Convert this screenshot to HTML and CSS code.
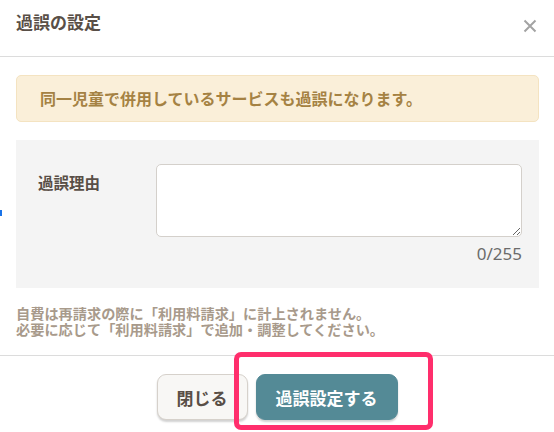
FILE: index.html
```html
<!DOCTYPE html>
<html lang="ja">
<head>
<meta charset="utf-8">
<title>過誤の設定</title>
<link rel="stylesheet" href="styles.css">
</head>
<body>
<div class="modal">
  <header class="modal-header">
    <h1 class="modal-title">過誤の設定</h1>
    <button class="close-btn" type="button" aria-label="閉じる">
      <svg width="14" height="14" viewBox="0 0 14 14"><path d="M1.5 1.5 L12.5 12.5 M12.5 1.5 L1.5 12.5" stroke="#a3a3a3" stroke-width="2" fill="none"/></svg>
    </button>
  </header>
  <div class="modal-body">
    <div class="alert">同一児童で併用しているサービスも過誤になります。</div>
    <div class="form-box">
      <label class="form-label" for="reason">過誤理由</label>
      <div class="form-field">
        <textarea id="reason" class="textarea"></textarea>
        <div class="counter">0/255</div>
      </div>
    </div>
    <p class="note">自費は再請求の際に「利用料請求」に計上されません。<br>必要に応じて「利用料請求」で追加・調整してください。</p>
  </div>
  <footer class="modal-footer">
    <button class="btn btn-secondary" type="button">閉じる</button>
    <button class="btn btn-primary" type="button">過誤設定する</button>
  </footer>
  <span class="edge-mark"></span>
  <span class="highlight"></span>
</div>
</body>
</html>
```

FILE: styles.css
```css
* { box-sizing: border-box; }
html, body { margin: 0; padding: 0; background: #fff; }
body {
  font-family: "Noto Sans CJK JP", "Noto Sans", sans-serif;
  color: #594f47;
}
.modal {
  position: relative;
  width: 554px;
  height: 432px;
  overflow: hidden;
}
.modal-header {
  display: flex;
  justify-content: space-between;
  align-items: flex-start;
  height: 57px;
  padding: 11px 17px 0 16px;
  border-bottom: 1px solid #dcdcdc;
}
.modal-title {
  margin: 0;
  font-size: 17px;
  line-height: 22px;
  font-weight: 700;
  color: #594f47;
}
.close-btn {
  margin-top: 8px;
  padding: 0;
  border: 0;
  background: none;
  width: 14px;
  height: 14px;
  display: block;
}
.close-btn svg { display: block; }
.modal-body {
  padding: 18px 15px 0 16px;
}
.alert {
  background: #faefd9;
  border: 1px solid #f4e3c1;
  border-radius: 5px;
  padding: 12px 23px;
  font-size: 16px;
  line-height: 21px;
  font-weight: 700;
  color: #a58243;
}
.form-box {
  margin-top: 18px;
  background: #f4f4f4;
  display: grid;
  grid-template-columns: 118px 1fr;
  padding: 24px 17px 24px 22px;
}
.form-label {
  padding-top: 8px;
  font-size: 15.5px;
  line-height: 20px;
  font-weight: 700;
  color: #594f47;
}
.form-field {
  display: flex;
  flex-direction: column;
}
.textarea {
  display: block;
  width: 100%;
  height: 73px;
  border: 1px solid #d4d0cb;
  border-radius: 5px;
  background: #fff;
  margin: 0;
  resize: both;
}
.counter {
  margin-top: 6px;
  text-align: right;
  font-family: "Noto Sans", sans-serif;
  font-size: 17px;
  line-height: 21px;
  color: #6b6b6b;
}
.note {
  margin: 17px 0 0;
  font-size: 14.2px;
  line-height: 16px;
  font-weight: 700;
  color: #a89a8b;
}
.modal-footer {
  margin-top: 18px;
  border-top: 1px solid #dcdcdc;
  display: flex;
  justify-content: center;
  gap: 8px;
  padding-top: 18px;
}
.btn {
  height: 46px;
  padding: 0 19px;
  border-radius: 9px;
  font-family: "Noto Sans CJK JP", sans-serif;
  font-size: 17px;
  font-weight: 700;
  line-height: 1;
  box-shadow: 0 2px 2px rgba(0,0,0,0.18);
}
.btn-secondary {
  width: 91px;
  background: #f8f7f5;
  border: 1px solid #d6d1cb;
  color: #594f47;
}
.btn-primary {
  width: 142px;
  background: #548a96;
  border: 1px solid #548a96;
  color: #fff;
}
.edge-mark {
  position: absolute;
  left: 0;
  top: 210px;
  width: 2px;
  height: 6px;
  background: #1a73e8;
}
.highlight {
  position: absolute;
  left: 234px;
  top: 352px;
  width: 199px;
  height: 78px;
  border: 5px solid #ff2e6c;
  border-radius: 7px;
  pointer-events: none;
}
```
